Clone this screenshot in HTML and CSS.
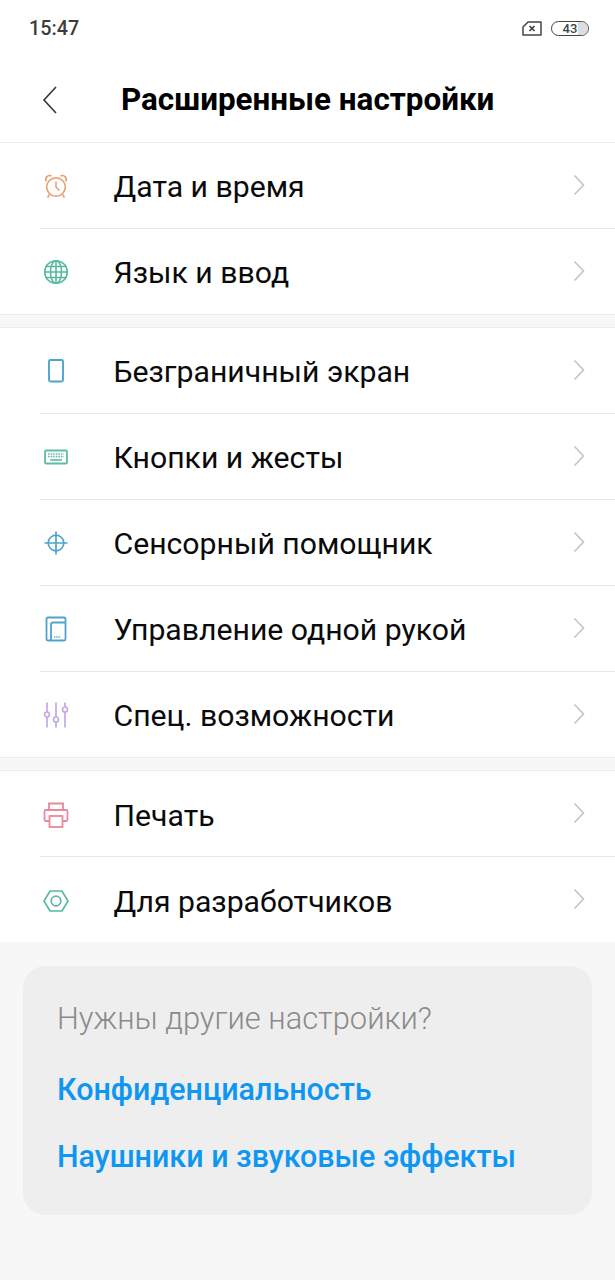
FILE: index.html
```html
<!DOCTYPE html>
<html lang="ru">
<head>
    <meta charset="UTF-8">
    <meta name="viewport" content="width=device-width, initial-scale=1.0">
    <title>Расширенные настройки</title>
    <link rel="stylesheet" href="styles.css">
</head>
<body>
    <div class="status-bar">
        <span class="status-time">15:47</span>
        <div class="status-icons">
            <svg class="sim-icon" width="20" height="15" viewBox="0 0 20 15" fill="none" stroke="#444" stroke-width="1.5">
                <path d="M6 1H19V14H1V6Z" stroke-linejoin="round"/>
                <path d="M7.5 5L12.5 10M12.5 5L7.5 10" stroke-width="1.7"/>
            </svg>
            <div class="battery"><span class="battery-level"></span><span class="battery-num">43</span></div>
        </div>
    </div>

    <header class="title-bar">
        <svg class="back-icon" width="16" height="30" viewBox="0 0 16 30" fill="none" stroke="#333" stroke-width="1.6">
            <path d="M14 2L2 15L14 28"/>
        </svg>
        <h1>Расширенные настройки</h1>
    </header>

    <section class="group">
        <div class="row">
            <svg class="icon" width="28" height="28" viewBox="0 0 28 28" fill="none" stroke="#e89a70" stroke-width="1.5">
                <circle cx="14" cy="15" r="9.3"/>
                <path d="M14 9.5V15L17.5 18.5"/>
                <path d="M4.2 9.5C2.5 6 5.5 2.5 9.5 4M23.8 9.5C25.5 6 22.5 2.5 18.5 4"/>
                <path d="M7.5 22.5L5.5 25.5M20.5 22.5L22.5 25.5"/>
            </svg>
            <span class="row-label">Дата и время</span>
            <svg class="chevron" width="12" height="22" viewBox="0 0 12 22" fill="none" stroke="#c4c4c4" stroke-width="1.6"><path d="M1.5 1.5L10.5 11L1.5 20.5"/></svg>
        </div>
        <div class="row">
            <svg class="icon" width="28" height="28" viewBox="0 0 28 28" fill="none" stroke="#57b9a2" stroke-width="1.6">
                <circle cx="14" cy="14" r="11.3"/>
                <ellipse cx="14" cy="14" rx="5.5" ry="11.3"/>
                <path d="M14 2.7V25.3M2.7 14H25.3M4.2 8.5H23.8M4.2 19.5H23.8"/>
            </svg>
            <span class="row-label">Язык и ввод</span>
            <svg class="chevron" width="12" height="22" viewBox="0 0 12 22" fill="none" stroke="#c4c4c4" stroke-width="1.6"><path d="M1.5 1.5L10.5 11L1.5 20.5"/></svg>
        </div>
    </section>

    <div class="spacer"></div>

    <section class="group">
        <div class="row">
            <svg class="icon" width="28" height="28" viewBox="0 0 28 28" fill="none" stroke="#4fa3cc" stroke-width="1.9">
                <rect x="7" y="3" width="14" height="21.5" rx="1.5"/>
            </svg>
            <span class="row-label">Безграничный экран</span>
            <svg class="chevron" width="12" height="22" viewBox="0 0 12 22" fill="none" stroke="#c4c4c4" stroke-width="1.6"><path d="M1.5 1.5L10.5 11L1.5 20.5"/></svg>
        </div>
        <div class="row">
            <svg class="icon" width="28" height="28" viewBox="0 0 28 28" fill="none" stroke="#62bba6" stroke-width="1.8">
                <rect x="3" y="7.5" width="22" height="13" rx="1"/>
                <path d="M6 11H22M6 13.5H22" stroke-width="1.4" stroke-dasharray="1.6 1"/>
                <path d="M8 17H20" stroke-width="1.6"/>
            </svg>
            <span class="row-label">Кнопки и жесты</span>
            <svg class="chevron" width="12" height="22" viewBox="0 0 12 22" fill="none" stroke="#c4c4c4" stroke-width="1.6"><path d="M1.5 1.5L10.5 11L1.5 20.5"/></svg>
        </div>
        <div class="row">
            <svg class="icon" width="28" height="28" viewBox="0 0 28 28" fill="none" stroke="#4fa3cc" stroke-width="1.7">
                <circle cx="14" cy="14" r="7.8"/>
                <path d="M14 2.5V25.5M2.5 14H25.5"/>
            </svg>
            <span class="row-label">Сенсорный помощник</span>
            <svg class="chevron" width="12" height="22" viewBox="0 0 12 22" fill="none" stroke="#c4c4c4" stroke-width="1.6"><path d="M1.5 1.5L10.5 11L1.5 20.5"/></svg>
        </div>
        <div class="row">
            <svg class="icon" width="28" height="28" viewBox="0 0 28 28" fill="none" stroke="#4fa3cc" stroke-width="1.8">
                <rect x="4.5" y="2.5" width="19" height="23" rx="1.5"/>
                <path d="M9 25.5V9.5Q9 7.5 11 7.5H23.5"/>
                <path d="M12 22H19" stroke-width="1.3" stroke-dasharray="1.3 1"/>
            </svg>
            <span class="row-label">Управление одной рукой</span>
            <svg class="chevron" width="12" height="22" viewBox="0 0 12 22" fill="none" stroke="#c4c4c4" stroke-width="1.6"><path d="M1.5 1.5L10.5 11L1.5 20.5"/></svg>
        </div>
        <div class="row">
            <svg class="icon" width="28" height="28" viewBox="0 0 28 28" fill="none" stroke="#c4a9e4" stroke-width="1.7">
                <path d="M5 1.5V11M5 16V26.5M14 1.5V16M14 21V26.5M23 1.5V6M23 11V26.5"/>
                <circle cx="5" cy="13.5" r="2.5"/>
                <circle cx="14" cy="18.5" r="2.5"/>
                <circle cx="23" cy="8.5" r="2.5"/>
            </svg>
            <span class="row-label">Спец. возможности</span>
            <svg class="chevron" width="12" height="22" viewBox="0 0 12 22" fill="none" stroke="#c4c4c4" stroke-width="1.6"><path d="M1.5 1.5L10.5 11L1.5 20.5"/></svg>
        </div>
    </section>

    <div class="spacer"></div>

    <section class="group group-last">
        <div class="row">
            <svg class="icon" width="28" height="28" viewBox="0 0 28 28" fill="none" stroke="#e58a97" stroke-width="1.8">
                <path d="M7.5 20H4Q2.5 20 2.5 18.5V10.5Q2.5 9 4 9H24Q25.5 9 25.5 10.5V18.5Q25.5 20 24 20H20.5"/>
                <path d="M7 9V2.5H21V9"/>
                <rect x="7.5" y="15" width="13" height="11"/>
            </svg>
            <span class="row-label">Печать</span>
            <svg class="chevron" width="12" height="22" viewBox="0 0 12 22" fill="none" stroke="#c4c4c4" stroke-width="1.6"><path d="M1.5 1.5L10.5 11L1.5 20.5"/></svg>
        </div>
        <div class="row">
            <svg class="icon" width="28" height="28" viewBox="0 0 28 28" fill="none" stroke="#57b9a2" stroke-width="1.7">
                <path d="M8 4H20L26 14L20 24H8L2 14Z"/>
                <circle cx="14" cy="14" r="4.8"/>
            </svg>
            <span class="row-label">Для разработчиков</span>
            <svg class="chevron" width="12" height="22" viewBox="0 0 12 22" fill="none" stroke="#c4c4c4" stroke-width="1.6"><path d="M1.5 1.5L10.5 11L1.5 20.5"/></svg>
        </div>
    </section>

    <div class="footer">
        <div class="more-card">
            <p class="more-title">Нужны другие настройки?</p>
            <a class="more-link" href="#">Конфиденциальность</a>
            <a class="more-link" href="#">Наушники и звуковые эффекты</a>
        </div>
    </div>
</body>
</html>
```

FILE: styles.css
```css
html, body {
    height: 100%;
}
body {
    margin: 0;
    background-color: #fff;
    color: #000;
    font-family: Roboto, "Liberation Sans", sans-serif;
    display: flex;
    flex-direction: column;
    overflow: hidden;
}
.status-bar {
    height: 57px;
    flex: none;
    box-sizing: border-box;
    padding: 0 26px 0 29px;
    display: flex;
    justify-content: space-between;
    align-items: center;
}
.status-time {
    font-size: 19.8px;
    font-weight: 500;
    color: #3c3c3c;
}
.status-icons {
    display: flex;
    align-items: center;
    gap: 9px;
}
.battery {
    width: 36px;
    height: 13px;
    border: 1.5px solid #444;
    border-radius: 8px;
    position: relative;
    overflow: hidden;
    display: flex;
    align-items: center;
    justify-content: center;
}
.battery-level {
    position: absolute;
    top: 0;
    bottom: 0;
    right: 0;
    width: 10px;
    background-color: #ddd;
}
.battery-num {
    position: relative;
    font-size: 13px;
    font-weight: 500;
    color: #444;
}
.title-bar {
    height: 86px;
    flex: none;
    box-sizing: border-box;
    border-bottom: 1px solid #ececec;
    padding: 0 0 0 42px;
    display: flex;
    align-items: center;
}
.title-bar h1 {
    margin: 0 0 0 63px;
    font-size: 31.4px;
    font-weight: 700;
    white-space: nowrap;
}
.group {
    flex: none;
}
.row {
    height: 86px;
    margin-left: 40px;
    padding-right: 30px;
    box-sizing: border-box;
    border-bottom: 1px solid #e6e6e6;
    display: flex;
    align-items: center;
}
.group .row:last-child {
    height: 85px;
    border-bottom: none;
}
.icon {
    flex: none;
    margin-left: 2px;
}
.group-last .icon {
    margin-top: 2px;
}
.row-label {
    margin-left: 43.5px;
    padding-top: 2px;
    font-size: 30.2px;
    flex: 1;
    color: #0a0a0a;
}
.group-last .row-label {
    padding-top: 4px;
}
.chevron {
    margin-top: -1px;
}
.spacer {
    height: 12px;
    flex: none;
    background-color: #f7f7f7;
    border-top: 1px solid #ececec;
    border-bottom: 1px solid #ececec;
}
.footer {
    flex: 1;
    background-color: #f7f7f7;
    padding: 24px 23px 0;
}
.more-card {
    height: 249px;
    box-sizing: border-box;
    padding: 33px 34px 0;
    background-color: #eeeeee;
    border-radius: 22px;
}
.more-title {
    margin: 0 0 31px;
    font-size: 30.85px;
    font-weight: 300;
    line-height: 40px;
    color: #8a8a8a;
}
.more-link {
    display: block;
    margin-bottom: 27px;
    font-size: 30.45px;
    font-weight: 500;
    line-height: 40px;
    color: #0d96f2;
    text-decoration: none;
}
```
